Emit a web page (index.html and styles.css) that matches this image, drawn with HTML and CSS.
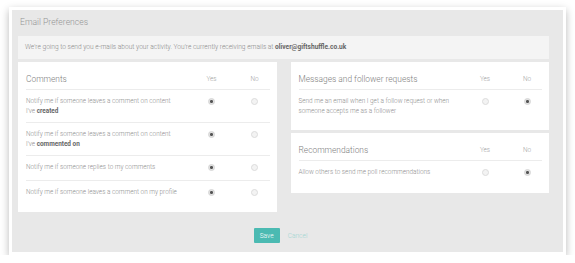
FILE: index.html
```html
<!DOCTYPE html>
<html lang="en">
<head>
  <meta charset="UTF-8" />
  <title>Email Preferences</title>
  <link rel="stylesheet" href="styles.css">
</head>
<body>
  <div class="frame">
    <h1 class="title">Email Preferences</h1>
    <div class="content">
      <div class="info">We're going to send you e-mails about your activity. You're currently receiving emails at <b>oliver@giftshuffle.co.uk</b></div>

      <div class="columns">
        <div class="card">
          <div class="row head">
            <h2>Comments</h2>
            <span class="col">Yes</span>
            <span class="col">No</span>
          </div>
          <div class="row">
            <p>Notify me if someone leaves a comment on content<br>I've <b>created</b></p>
            <span class="col"><input type="radio" name="c1" checked></span>
            <span class="col"><input type="radio" name="c1"></span>
          </div>
          <div class="row">
            <p>Notify me if someone leaves a comment on content<br>I've <b>commented on</b></p>
            <span class="col"><input type="radio" name="c2" checked></span>
            <span class="col"><input type="radio" name="c2"></span>
          </div>
          <div class="row">
            <p>Notify me if someone replies to my comments</p>
            <span class="col"><input type="radio" name="c3" checked></span>
            <span class="col"><input type="radio" name="c3"></span>
          </div>
          <div class="row">
            <p>Notify me if someone leaves a comment on my profile</p>
            <span class="col"><input type="radio" name="c4" checked></span>
            <span class="col"><input type="radio" name="c4"></span>
          </div>
        </div>

        <div class="stack">
          <div class="card">
            <div class="row head">
              <h2>Messages and follower requests</h2>
              <span class="col">Yes</span>
              <span class="col">No</span>
            </div>
            <div class="row">
              <p>Send me an email when I get a follow request or when someone accepts me as a follower</p>
              <span class="col"><input type="radio" name="m1"></span>
              <span class="col"><input type="radio" name="m1" checked></span>
            </div>
          </div>
          <div class="card">
            <div class="row head">
              <h2>Recommendations</h2>
              <span class="col">Yes</span>
              <span class="col">No</span>
            </div>
            <div class="row">
              <p>Allow others to send me poll recommendations</p>
              <span class="col"><input type="radio" name="r1"></span>
              <span class="col"><input type="radio" name="r1" checked></span>
            </div>
          </div>
        </div>
      </div>

      <div class="actions">
        <button class="save">Save</button>
        <a class="cancel" href="#">Cancel</a>
      </div>
    </div>
  </div>
</body>
</html>
```

FILE: styles.css
```css
body {
  margin: 0;
  background: #fff;
  font-family: 'Roboto', 'Liberation Sans', sans-serif;
  color: #888;
}

.frame {
  margin: 7px 9px 0 9px;
  width: 551px;
  height: 242px;
  background: #e8e8e8;
  border: 3px solid #fff;
  box-shadow: 0 3px 8px rgba(0,0,0,0.28);
}

.title {
  margin: 0;
  padding: 5px 8px 0;
  font-size: 8.6px;
  line-height: 14px;
  font-weight: 300;
  color: #959595;
}

.content {
  padding: 7px 14px 0 6px;
}

.info {
  height: 23px;
  line-height: 23px;
  padding-left: 7px;
  background: #f4f4f4;
  font-size: 6.6px;
  font-weight: 300;
  color: #8a8a8a;
}

.info b {
  font-weight: 700;
  color: #666;
}

.columns {
  display: grid;
  grid-template-columns: 1fr 1fr;
  gap: 14px;
  align-items: start;
  margin-top: 3px;
}

.stack {
  display: flex;
  flex-direction: column;
  gap: 3px;
}

.card {
  background: #fff;
  padding: 0 7px 7px 8px;
}

.row {
  display: grid;
  grid-template-columns: 1fr 30px 30px;
  column-gap: 13px;
  align-items: start;
  padding: 6px 0;
  border-top: 1px solid #ececec;
  font-size: 6.4px;
  line-height: 10px;
  font-weight: 300;
}

.row.head {
  border-top: none;
  padding: 10px 0 3px;
  align-items: center;
}

.row h2 {
  margin: 0;
  font-size: 8.4px;
  line-height: 14px;
  font-weight: 300;
  color: #808080;
}

.row p {
  margin: 0;
  min-height: 12px;
  color: #8f8f8f;
}

.row p b {
  font-weight: 700;
  color: #666;
}

.col {
  text-align: center;
  color: #a0a0a0;
}

.stack .card {
  padding-bottom: 8px;
}

.stack .row {
  column-gap: 12px;
}

input[type="radio"] {
  appearance: none;
  -webkit-appearance: none;
  display: block;
  margin: 2px auto 0;
  width: 7px;
  height: 7px;
  border-radius: 50%;
  border: 1px solid #dcdcdc;
  background: #f3f3f3;
  box-sizing: border-box;
}

input[type="radio"]:checked {
  background: radial-gradient(circle, #555 0, #555 1.2px, #e2e2e2 1.8px);
  border-color: #d4d4d4;
}

.actions {
  display: flex;
  justify-content: center;
  align-items: center;
  gap: 8px;
  margin-top: 16px;
  padding-right: 6px;
}

.save {
  width: 26px;
  height: 15px;
  padding: 0;
  border: none;
  border-radius: 1px;
  background: #4bbab2;
  color: #fff;
  font-family: inherit;
  font-size: 6.6px;
  font-weight: 300;
}

.cancel {
  font-size: 6.6px;
  font-weight: 300;
  color: #9fd6d2;
  text-decoration: none;
}
```
